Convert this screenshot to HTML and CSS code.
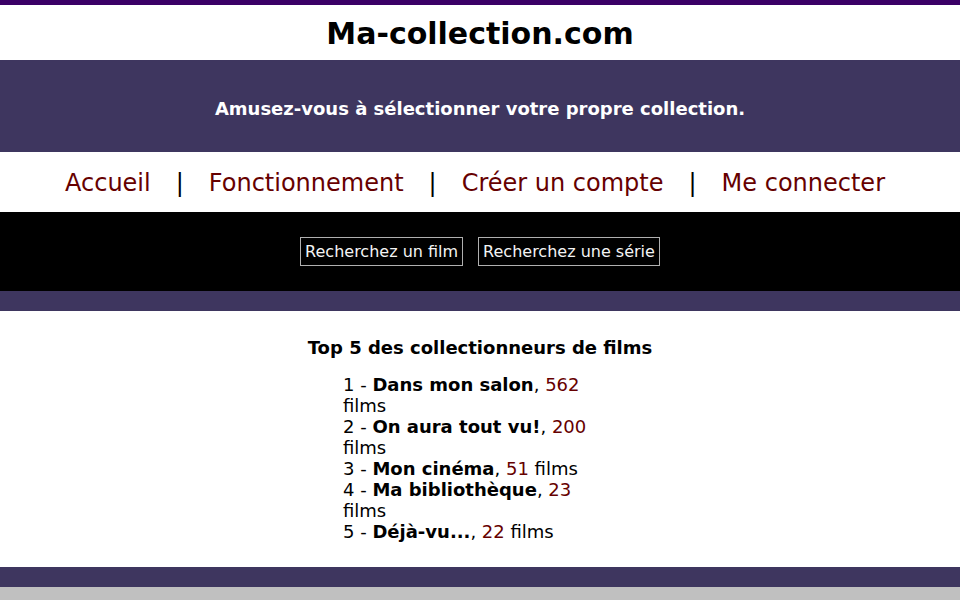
FILE: index.html
```html
<!DOCTYPE html>
<html lang="fr">
<head>
<meta charset="utf-8">
<title>Ma-collection.com</title>
<link rel="stylesheet" href="styles.css">
</head>
<body>
<header class="top">
  <h1 class="logo">Ma-collection.com</h1>
</header>
<div class="banner">Amusez-vous à sélectionner votre propre collection.</div>
<nav class="nav">
  <a href="#">Accueil</a><span class="sep">|</span><a href="#">Fonctionnement</a><span class="sep">|</span><a href="#">Créer un compte</a><span class="sep">|</span><a href="#">Me connecter</a>
</nav>
<div class="search">
  <button class="btn">Recherchez un film</button>
  <button class="btn">Recherchez une série</button>
</div>
<div class="strip"></div>
<main class="content">
  <h2 class="title">Top 5 des collectionneurs de films</h2>
  <div class="list">
    1 - <b>Dans mon salon</b>, <span class="num">562</span> films<br>
    2 - <b>On aura tout vu!</b>, <span class="num">200</span> films<br>
    3 - <b>Mon cinéma</b>, <span class="num">51</span> films<br>
    4 - <b>Ma bibliothèque</b>, <span class="num">23</span> films<br>
    5 - <b>Déjà-vu...</b>, <span class="num">22</span> films
  </div>
</main>
<div class="strip footer-strip"></div>
<div class="bottom"></div>
</body>
</html>
```
FILE: styles.css
```css
html, body {
  margin: 0;
  padding: 0;
}
body {
  font-family: "DejaVu Sans", Verdana, sans-serif;
  background: #c0c0c0;
  color: #000;
}
.top {
  background: #fff;
  border-top: 5px solid #3b0066;
  height: 55px;
  display: flex;
  align-items: center;
  justify-content: center;
}
.logo {
  margin: 0;
  font-size: 30px;
  font-weight: bold;
  padding-top: 2px;
}
.banner {
  background: #3e365f;
  color: #fff;
  height: 92px;
  display: flex;
  align-items: center;
  justify-content: center;
  font-weight: bold;
  font-size: 18px;
  padding-top: 4px;
  box-sizing: border-box;
}
.nav {
  background: #fff;
  height: 60px;
  display: flex;
  align-items: center;
  justify-content: center;
  font-size: 24px;
  padding: 2px 10px 0 0;
  box-sizing: border-box;
}
.nav a {
  color: #660000;
  text-decoration: none;
}
.sep {
  margin: 0 25px;
  color: #000;
}
.search {
  background: #000;
  height: 79px;
  display: flex;
  align-items: center;
  justify-content: center;
  gap: 15px;
}
.btn {
  background: #000;
  color: #f4f4f4;
  border: 1px solid #b0b0b0;
  font-family: "DejaVu Sans", Verdana, sans-serif;
  font-size: 16px;
  height: 29px;
  padding: 0 4px;
  margin: 0;
}
.strip {
  background: #3e365f;
  height: 20px;
}
.content {
  background: #fff;
  height: 256px;
  padding-top: 26px;
  box-sizing: border-box;
}
.title {
  margin: 0 0 16px;
  text-align: center;
  font-size: 18px;
  font-weight: bold;
}
.list {
  width: 274px;
  margin: 0 auto;
  font-size: 18px;
  line-height: 21px;
}
.num {
  color: #660000;
}
.bottom {
  height: 13px;
  background: #c0c0c0;
}
```
